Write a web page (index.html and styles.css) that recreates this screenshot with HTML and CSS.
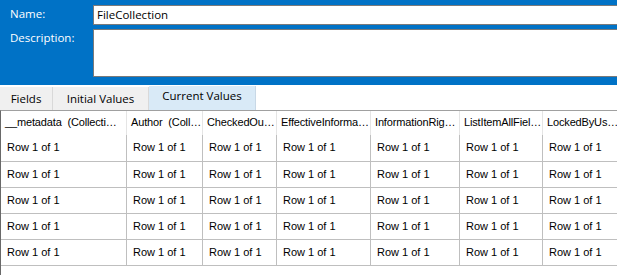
FILE: index.html
```html
<!DOCTYPE html>
<html>
<head>
<meta charset="utf-8">
<link rel="stylesheet" href="styles.css">
</head>
<body>
<div class="app">
  <div class="props">
    <div class="label name-label">Name:</div>
    <div class="input name-input">FileCollection</div>
    <div class="label desc-label">Description:</div>
    <div class="input desc-input"></div>
  </div>
  <div class="tabs">
    <div class="tab tab-fields">Fields</div>
    <div class="tab tab-initial">Initial Values</div>
    <div class="tab tab-current">Current Values</div>
  </div>
  <div class="grid">
    <div class="hcell">__metadata  (Collecti…</div>
    <div class="hcell">Author  (Coll…</div>
    <div class="hcell">CheckedOu…</div>
    <div class="hcell">EffectiveInforma…</div>
    <div class="hcell">InformationRig…</div>
    <div class="hcell">ListItemAllFiel…</div>
    <div class="hcell">LockedByUs…</div>

    <div class="cell">Row 1 of 1</div><div class="cell">Row 1 of 1</div><div class="cell">Row 1 of 1</div><div class="cell">Row 1 of 1</div><div class="cell">Row 1 of 1</div><div class="cell">Row 1 of 1</div><div class="cell">Row 1 of 1</div>
    <div class="cell">Row 1 of 1</div><div class="cell">Row 1 of 1</div><div class="cell">Row 1 of 1</div><div class="cell">Row 1 of 1</div><div class="cell">Row 1 of 1</div><div class="cell">Row 1 of 1</div><div class="cell">Row 1 of 1</div>
    <div class="cell">Row 1 of 1</div><div class="cell">Row 1 of 1</div><div class="cell">Row 1 of 1</div><div class="cell">Row 1 of 1</div><div class="cell">Row 1 of 1</div><div class="cell">Row 1 of 1</div><div class="cell">Row 1 of 1</div>
    <div class="cell">Row 1 of 1</div><div class="cell">Row 1 of 1</div><div class="cell">Row 1 of 1</div><div class="cell">Row 1 of 1</div><div class="cell">Row 1 of 1</div><div class="cell">Row 1 of 1</div><div class="cell">Row 1 of 1</div>
    <div class="cell">Row 1 of 1</div><div class="cell">Row 1 of 1</div><div class="cell">Row 1 of 1</div><div class="cell">Row 1 of 1</div><div class="cell">Row 1 of 1</div><div class="cell">Row 1 of 1</div><div class="cell">Row 1 of 1</div>
  </div>
</div>
</body>
</html>
```
FILE: styles.css
```css
html, body {
  margin: 0;
  padding: 0;
  background: #ffffff;
}
.app {
  width: 617px;
  height: 275px;
  overflow: hidden;
  font-family: "Open Sans", "Noto Sans", sans-serif;
  font-size: 11px;
  color: #000;
}
.props {
  background: #0072c6;
  height: 85px;
  box-sizing: border-box;
  padding-top: 5px;
  display: grid;
  grid-template-columns: 93px 524px;
  grid-template-rows: 20px 48px;
  row-gap: 4px;
}
.label {
  color: #ffffff;
  padding-left: 10px;
  font-size: 11.5px;
  line-height: 16px;
}
.name-label { padding-top: 1px; }
.desc-label { padding-top: 1px; }
.input {
  background: #fff;
  border: 1px solid #7a7a7a;
  border-right: none;
  box-sizing: border-box;
  font-size: 11.5px;
  line-height: 17px;
  padding-left: 3px;
  color: #000;
}
.tabs {
  height: 25px;
  display: flex;
  align-items: flex-end;
}
.tab {
  box-sizing: border-box;
  height: 23px;
  background: #f0f0f0;
  border-right: 1px solid #d9d9d9;
  font-size: 11.5px;
  line-height: 23px;
  text-align: center;
  color: #000;
}
.tab-fields { width: 53px; }
.tab-initial { width: 96px; }
.tab-current {
  width: 107px;
  height: 24px;
  line-height: 20px;
  background: #d9eaf7;
  border-right: 1px solid #c8d8e6;
}
.grid {
  box-sizing: border-box;
  width: 617px;
  display: grid;
  grid-template-columns: 126px 76px 74px 94px 89px 83px 1fr;
  grid-template-rows: 24px 27px 26px 26px 26px 26px;
  border-top: 1px solid #a0a0a0;
  border-left: 1px solid #696969;
  height: 165px;
  align-content: start;
  font-family: "Liberation Sans", Arial, sans-serif;
  font-size: 11px;
}
.hcell {
  box-sizing: border-box;
  border-right: 1px solid #e5e5e5;
  padding-left: 4px;
  line-height: 22px;
  white-space: pre;
  letter-spacing: -0.15px;
  overflow: hidden;
  color: #000;
}
.cell {
  box-sizing: border-box;
  border-right: 1px solid #bfbfbf;
  border-bottom: 1px solid #bfbfbf;
  padding-left: 6px;
  line-height: 25px;
  white-space: nowrap;
  overflow: hidden;
  color: #000;
}
.grid > div:nth-child(7n) {
  border-right: none;
}
```
